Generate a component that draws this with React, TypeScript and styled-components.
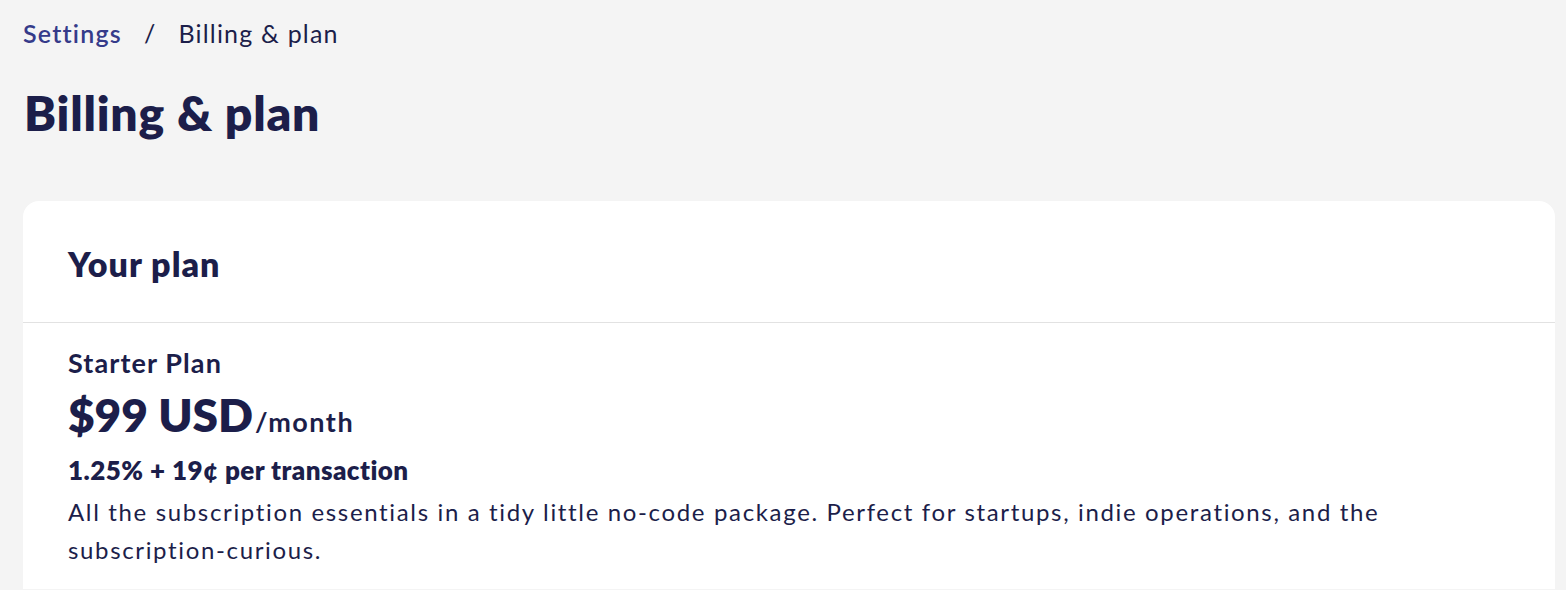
import React from "react";
import styled, { createGlobalStyle } from "styled-components";

const Global = createGlobalStyle`
  html, body { margin: 0; padding: 0; background: #f4f4f4; }
  body { font-family: "Lato", "Noto Sans", sans-serif; color: #1c1e4a; }
  * { box-sizing: border-box; }
`;

const Page = styled.div`
  padding: 16px 11px 0 23px;
  min-height: 590px;
`;

const Breadcrumb = styled.nav`
  display: flex;
  align-items: center;
  gap: 22px;
  font-size: 25px;
  line-height: 34px;
  letter-spacing: 1.2px;
`;

const CrumbLink = styled.a`
  color: #353b8a;
  font-weight: 600;
  text-decoration: none;
`;

const CrumbSep = styled.span`
  color: #1c1e4a;
`;

const CrumbCurrent = styled.span`
  color: #1c1e4a;
`;

const Title = styled.h1`
  margin: 35px 0 0 1px;
  font-size: 48px;
  line-height: 56px;
  font-weight: 800;
  color: #1c1e4a;
  letter-spacing: 0.8px;
`;

const Card = styled.section`
  margin-top: 60px;
  background: #ffffff;
  border-radius: 16px 16px 0 0;
`;

const CardHeader = styled.header`
  padding: 4px 45px 0;
  height: 122px;
  display: flex;
  align-items: center;
  border-bottom: 1px solid #e2e2e2;
`;

const CardTitle = styled.h2`
  margin: 0;
  font-size: 34px;
  font-weight: 800;
  color: #1c1e4a;
  letter-spacing: 1px;
`;

const CardBody = styled.div`
  padding: 23px 45px 20px;
  display: flex;
  flex-direction: column;
`;

const PlanName = styled.div`
  font-size: 27px;
  line-height: 34px;
  font-weight: 700;
  letter-spacing: 1.1px;
`;

const Price = styled.div`
  margin-top: 9px;
  font-size: 46px;
  line-height: 52px;
  font-weight: 800;
  display: flex;
  align-items: baseline;
  letter-spacing: -0.1px;
`;

const Period = styled.span`
  margin-left: 2px;
  font-size: 27px;
  font-weight: 700;
  letter-spacing: 1.5px;
`;

const Fee = styled.div`
  margin-top: 5px;
  font-size: 26px;
  line-height: 34px;
  font-weight: 800;
  letter-spacing: 0.45px;
`;

const Description = styled.p`
  margin: 6px 0 0;
  font-size: 24px;
  line-height: 38px;
  font-weight: 400;
  letter-spacing: 1.65px;
  max-width: 1350px;
`;

export default function App() {
  return (
    <>
      <Global />
      <Page>
        <Breadcrumb>
          <CrumbLink href="#">Settings</CrumbLink>
          <CrumbSep>/</CrumbSep>
          <CrumbCurrent>Billing &amp; plan</CrumbCurrent>
        </Breadcrumb>
        <Title>Billing &amp; plan</Title>
        <Card>
          <CardHeader>
            <CardTitle>Your plan</CardTitle>
          </CardHeader>
          <CardBody>
            <PlanName>Starter Plan</PlanName>
            <Price>
              $99 USD<Period>/month</Period>
            </Price>
            <Fee>1.25% + 19¢ per transaction</Fee>
            <Description>
              All the subscription essentials in a tidy little no-code package. Perfect for startups, indie operations, and the subscription-curious.
            </Description>
          </CardBody>
        </Card>
      </Page>
    </>
  );
}
